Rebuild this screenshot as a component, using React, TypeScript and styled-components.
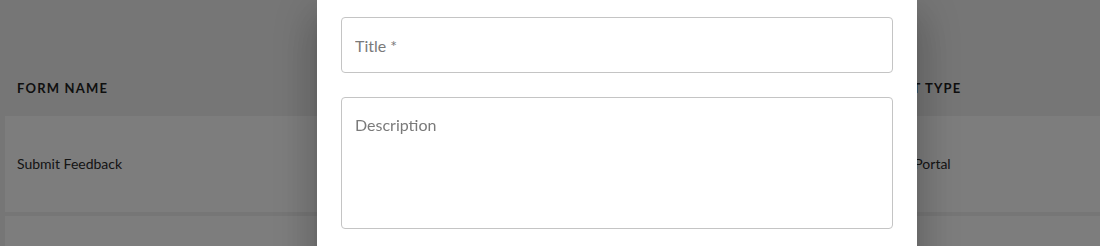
import React from 'react';
import styled, { createGlobalStyle } from 'styled-components';

const GlobalStyle = createGlobalStyle`
	html, body {
		margin: 0;
		padding: 0;
		height: 100%;
		overflow: hidden;
	}
	body {
		background: #ececec;
		font-family: Lato, 'Open Sans', sans-serif;
	}
`;

const forms = [{ name: 'Submit Feedback', type: 'Customer Portal' }];

const App = () => {
	return (
		<>
			<GlobalStyle />
			<Page>
				<Table>
					<HeaderRow>
						<HeaderCell>Form Name</HeaderCell>
						<HeaderCell>Content Type</HeaderCell>
					</HeaderRow>
					{forms.map((form) => (
						<BodyRow key={form.name}>
							<Cell>{form.name}</Cell>
							<Cell>{form.type}</Cell>
						</BodyRow>
					))}
					<BodyRow />
				</Table>
			</Page>
			<Overlay>
				<Dialog>
					<Form>
						<Field placeholder="Title *" />
						<TextArea placeholder="Description" />
					</Form>
				</Dialog>
			</Overlay>
		</>
	);
};

export default App;

const Page = styled.div`
	padding: 80px 0 0 5px;
`;

const Table = styled.div`
	display: flex;
	flex-direction: column;
	gap: 4px;
`;

const HeaderRow = styled.div`
	display: grid;
	grid-template-columns: 834px 1fr;
	padding-bottom: 20px;
	margin-bottom: -4px;
`;

const HeaderCell = styled.div`
	padding: 0 12px;
	font-size: 13px;
	line-height: 16px;
	font-weight: 700;
	letter-spacing: 1.2px;
	text-transform: uppercase;
	color: #1e1e1e;
`;

const BodyRow = styled.div`
	display: grid;
	grid-template-columns: 834px 1fr;
	align-items: center;
	height: 96px;
	background: #fafafa;
`;

const Cell = styled.div`
	padding: 0 12px;
	font-size: 14px;
	line-height: 16px;
	color: #2a2a2a;
`;

const Overlay = styled.div`
	position: fixed;
	inset: 0;
	display: flex;
	padding-left: 317px;
	background: rgba(0, 0, 0, 0.5);
	overflow: hidden;
`;

const Dialog = styled.div`
	width: 600px;
	height: 400px;
	background: #fff;
	box-shadow: 0 11px 15px -7px rgba(0, 0, 0, 0.2), 0 24px 38px 3px rgba(0, 0, 0, 0.14),
		0 9px 46px 8px rgba(0, 0, 0, 0.12);
	padding: 17px 24px 0;
	box-sizing: border-box;
`;

const Form = styled.div`
	display: flex;
	flex-direction: column;
	gap: 24px;
`;

const Field = styled.input`
	box-sizing: border-box;
	height: 56px;
	padding: 0 13px;
	border: 1px solid #c4c4c4;
	border-radius: 4px;
	font-family: Lato, 'Open Sans', sans-serif;
	font-size: 16px;
	color: #222;
	outline: none;
	&::placeholder {
		color: #7a7a7a;
	}
`;

const TextArea = styled.textarea`
	box-sizing: border-box;
	height: 132px;
	padding: 17px 13px;
	border: 1px solid #c4c4c4;
	border-radius: 4px;
	font-family: Lato, 'Open Sans', sans-serif;
	font-size: 16px;
	line-height: 19px;
	color: #222;
	resize: none;
	outline: none;
	&::placeholder {
		color: #7a7a7a;
	}
`;
